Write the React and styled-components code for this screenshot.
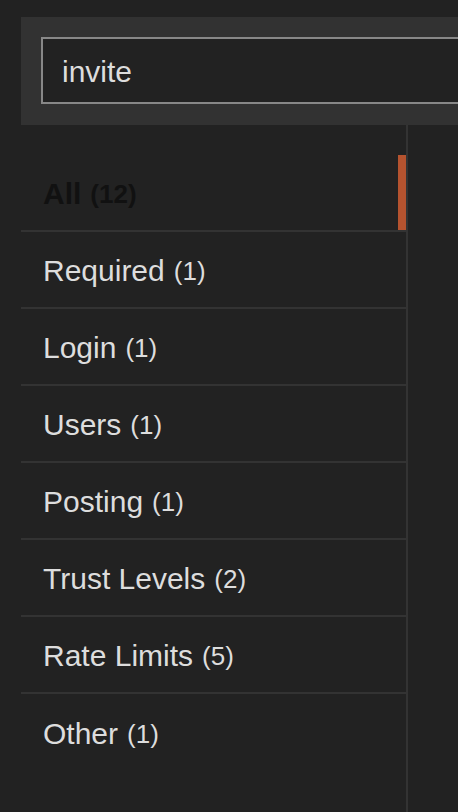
import React from 'react'
import styled, { createGlobalStyle } from 'styled-components'

const GlobalStyle = createGlobalStyle`
    html, body {
        margin: 0;
        padding: 0;
        background: #222222;
        overflow: hidden;
    }
    body {
        font-family: "Liberation Sans", Arial, sans-serif;
    }
`

const Page = styled.div`
    display: flex;
    flex-direction: column;
    height: 100vh;
    width: 458px;
    padding: 17px 0 0 21px;
    box-sizing: border-box;
    overflow: hidden;
`

const SearchBar = styled.div`
    background: #323232;
    padding: 20px 0 21px 20px;
`

const SearchInput = styled.input`
    display: block;
    width: 100%;
    height: 67px;
    box-sizing: border-box;
    background: #222222;
    border: 2px solid #888888;
    border-right: none;
    padding: 2px 0 0 19px;
    font-family: "Liberation Sans", Arial, sans-serif;
    font-size: 30px;
    color: #dddddd;
    outline: none;
`

const Body = styled.div`
    flex: 1;
    display: grid;
    grid-template-columns: 387px auto;
`

const Sidebar = styled.nav`
    border-right: 2px solid #333333;
    padding-top: 30px;
`

const NavRow = styled.div`
    height: 75px;
    display: flex;
    align-items: center;
    gap: 9px;
    padding: 2px 0 0 22px;
    box-sizing: border-box;
    height: 77px;
    border-bottom: 2px solid #333333;
    color: ${props => props.active ? '#111111' : '#dddddd'};
    font-weight: ${props => props.active ? 700 : 400};
    box-shadow: ${props => props.active ? 'inset -8px 0 0 #b5532f' : 'none'};

    &:last-child {
        border-bottom: none;
    }
`

const Label = styled.span`
    font-size: 30px;
`

const Count = styled.span`
    font-size: 26px;
    padding-top: 2px;
`

const categories = [
    { name: 'All', count: 12, active: true },
    { name: 'Required', count: 1 },
    { name: 'Login', count: 1 },
    { name: 'Users', count: 1 },
    { name: 'Posting', count: 1 },
    { name: 'Trust Levels', count: 2 },
    { name: 'Rate Limits', count: 5 },
    { name: 'Other', count: 1 },
]

const App = () => (
    <>
        <GlobalStyle />
        <Page>
            <SearchBar>
                <SearchInput defaultValue="invite" />
            </SearchBar>
            <Body>
                <Sidebar>
                    {categories.map(c => (
                        <NavRow key={c.name} active={c.active}>
                            <Label>{c.name}</Label>
                            <Count>({c.count})</Count>
                        </NavRow>
                    ))}
                </Sidebar>
                <div />
            </Body>
        </Page>
    </>
)

export default App
